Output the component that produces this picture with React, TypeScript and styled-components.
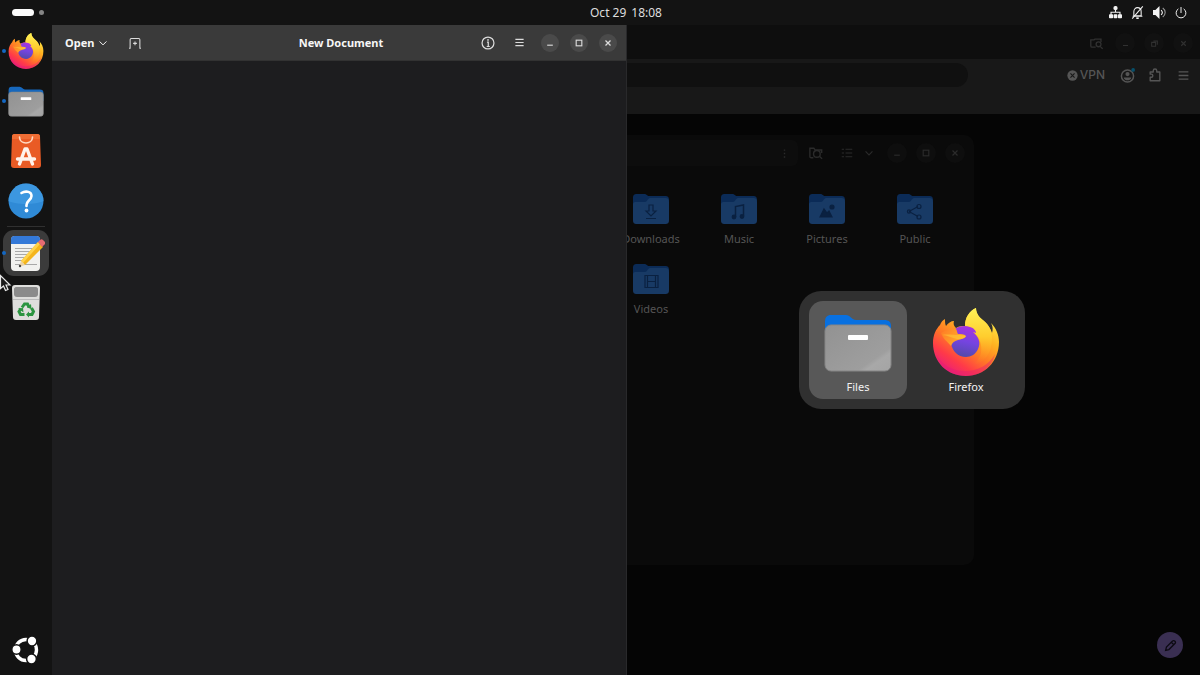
import React, { useId } from "react";
import styled, { createGlobalStyle, css } from "styled-components";

const GlobalStyle = createGlobalStyle`
  *, *::before, *::after { box-sizing: border-box; }
  html, body { margin: 0; background: #050505; }
  body { font-family: "Noto Sans", "Open Sans", sans-serif; font-size: 11px; line-height: 16px; color: #f2f2f2; }
  button, input, textarea { font: inherit; color: inherit; border: 0; padding: 0; margin: 0; background: none; outline: none; }
  svg { display: block; flex: none; }
`;

const Shell = styled.div`
  display: flex;
  flex-direction: column;
  min-height: 100vh;
  overflow: hidden;
  position: relative;
`;

/* ---------- top bar ---------- */
const TopBar = styled.header`
  display: grid;
  grid-template-columns: 52px 1fr auto 1fr;
  align-items: center;
  height: 25px;
  background: #131313;
`;
const Workspaces = styled.button`
  display: flex;
  align-items: center;
  gap: 5px;
  padding-left: 12px;
`;
const WorkspaceMark = styled.span<{ $active?: boolean }>`
  width: ${(p) => (p.$active ? 22 : 5)}px;
  height: ${(p) => (p.$active ? 7 : 5)}px;
  border-radius: 4px;
  background: ${(p) => (p.$active ? "#fbfbfb" : "#858585")};
`;
const Clock = styled.button`
  display: flex;
  gap: 5px;
  grid-column: 3;
  color: #dedede;
  font-size: 12px;
`;
const StatusButton = styled.button`
  display: flex;
  justify-self: end;
  align-items: center;
  gap: 9px;
  padding-right: 13px;
`;

/* ---------- dock ---------- */
const Main = styled.div`
  display: flex;
  flex: 1;
`;
const Dock = styled.nav`
  display: flex;
  flex-direction: column;
  width: 52px;
  padding-top: 1px;
  background: #131313;
`;
const DockItem = styled.button<{ $running?: boolean; $active?: boolean }>`
  position: relative;
  display: grid;
  place-items: center;
  width: 46px;
  height: 46px;
  margin: 2px 3px;
  border-radius: 11px;
  background: ${(p) => (p.$active ? "#3b3b3b" : "none")};
  ${(p) =>
    p.$running &&
    css`
      &::before {
        content: "";
        position: absolute;
        left: -1px;
        width: 4px;
        height: 4px;
        border-radius: 50%;
        background: #1467c2;
      }
    `}
`;
const DockDivider = styled.hr`
  width: 38px;
  height: 1px;
  margin: 0 auto 1px;
  border: 0;
  background: #303030;
`;
const DockSpacer = styled.div`
  flex: 1;
`;

/* ---------- windows ---------- */
const Desktop = styled.main`
  position: relative;
  flex: 1;
  background: #050505;
`;
const RoundButton = styled.button<{ $fill?: string; $size?: number }>`
  display: grid;
  place-items: center;
  flex: none;
  width: ${(p) => p.$size ?? 20}px;
  height: ${(p) => p.$size ?? 20}px;
  border-radius: 50%;
  background: ${(p) => p.$fill ?? "none"};
`;
const Group = styled.div<{ $gap: number; $end?: boolean }>`
  display: flex;
  align-items: center;
  gap: ${(p) => p.$gap}px;
  ${(p) => p.$end && "justify-self: end;"}
`;

const BrowserWindow = styled.section`
  position: absolute;
  inset: 0;
  color: #555;
`;
const BrowserTitle = styled.div`
  display: flex;
  justify-content: flex-end;
  align-items: center;
  gap: 9px;
  height: 34px;
  padding: 2px 7px 0 0;
  background: #0e0e0e;
  color: #313131;
`;
const BrowserTools = styled.div`
  display: flex;
  align-items: center;
  gap: 8px;
  height: 55px;
  padding: 0 7px 23px 0;
  background: #181818;
`;
const AddressBar = styled.input`
  flex: 1;
  height: 24px;
  margin-right: 91px;
  border-radius: 12px;
  background: #101010;
`;
const VpnButton = styled.button`
  display: flex;
  align-items: center;
  gap: 2px;
  margin-right: 4px;
  font-family: Inter, sans-serif;
  font-size: 12px;
  font-weight: 500;
`;
const EditFab = styled.button`
  position: absolute;
  right: 17px;
  bottom: 17px;
  display: grid;
  place-items: center;
  width: 26px;
  height: 26px;
  border-radius: 50%;
  background: #3a2f52;
  color: #0c0a12;
`;

const FilesWindow = styled.section`
  position: absolute;
  top: 110px;
  right: 226px;
  width: 367px;
  height: 430px;
  border-radius: 10px;
  background: #0a0a0a;
  color: #555;
`;
const FilesHeader = styled.div`
  display: flex;
  align-items: center;
  gap: 8px;
  height: 36px;
  padding-right: 9px;
  color: #2b2b2b;
`;
const PathBar = styled.div`
  display: flex;
  flex: 1;
  justify-content: flex-end;
  align-items: center;
  height: 26px;
  padding-right: 4px;
  border-radius: 6px;
  background: #0d0d0d;
`;
const FolderGrid = styled.div`
  display: grid;
  grid-template-columns: repeat(4, 88px);
  row-gap: 10px;
  padding-top: 22px;
`;
const FolderItem = styled.button`
  display: flex;
  flex-direction: column;
  align-items: center;
  gap: 6px;
  height: 60px;
`;

const EditorWindow = styled.section`
  position: absolute;
  inset: 0 calc(50% - 1px) 0 0;
  display: flex;
  flex-direction: column;
  border-right: 1px solid #29292b;
  background: #1d1d1f;
`;
const EditorHeader = styled.div`
  display: grid;
  grid-template-columns: 1fr auto 1fr;
  align-items: center;
  height: 36px;
  padding: 0 9px 0 13px;
  background: #3a3a3a;
  border-bottom: 1px solid #323232;
  color: #dcdcdc;
`;
const OpenButton = styled.button`
  display: flex;
  align-items: center;
  gap: 4px;
  font-weight: 700;
  color: #f6f6f6;
`;
const EditorTitle = styled.h1`
  margin: 0;
  font-size: 11px;
  font-weight: 700;
  color: #f6f6f6;
`;
const EditorText = styled.textarea`
  flex: 1;
  padding: 8px;
  resize: none;
`;

/* ---------- app switcher ---------- */
const SwitcherLayer = styled.div`
  position: absolute;
  inset: 0 2px 0 50%;
  display: grid;
  place-items: center;
`;
const Switcher = styled.div`
  display: flex;
  gap: 10px;
  padding: 10px;
  border-radius: 22px;
  background: #303030;
`;
const SwitcherItem = styled.button<{ $selected?: boolean }>`
  display: flex;
  flex-direction: column;
  align-items: center;
  gap: 1px;
  width: 98px;
  height: 98px;
  padding-top: 5px;
  border-radius: 14px;
  background: ${(p) => (p.$selected ? "#585858" : "none")};
`;
const Pointer = styled.svg`
  position: absolute;
  left: 0;
  top: 274px;
`;

/* ---------- application icons ---------- */
function FirefoxIcon({ size }: { size: number }) {
  const id = useId();
  return (
    <svg width={size} height={size} viewBox="-3 -2 72 72">
      <defs>
        <linearGradient id={id + "b"} x1="0.85" y1="0.1" x2="0.25" y2="1">
          <stop offset="0" stopColor="#fff04a" />
          <stop offset="0.3" stopColor="#ffb321" />
          <stop offset="0.55" stopColor="#ff7a25" />
          <stop offset="0.78" stopColor="#ff3a48" />
          <stop offset="1" stopColor="#e81a80" />
        </linearGradient>
        <linearGradient id={id + "p"} x1="0.6" y1="0" x2="0.4" y2="1">
          <stop offset="0" stopColor="#a932e0" />
          <stop offset="0.5" stopColor="#7544e0" />
          <stop offset="1" stopColor="#524aa8" />
        </linearGradient>
        <linearGradient id={id + "f"} x1="0.5" y1="0" x2="0.5" y2="1">
          <stop offset="0" stopColor="#fff257" />
          <stop offset="0.5" stopColor="#ffcd2e" />
          <stop offset="1" stopColor="#ff8b1f" stopOpacity="0" />
        </linearGradient>
        <linearGradient id={id + "h"} x1="0" y1="0" x2="1" y2="0.5">
          <stop offset="0" stopColor="#ff7a26" />
          <stop offset="1" stopColor="#ffb02a" />
        </linearGradient>
      </defs>
      <path fill={`url(#${id}b)`} d="M33 68C14 68 0 54 0 35c0-8 3-14 7-18 1-3 3-5 5-6 0 3 0 5 1 7 2-3 5-5 8-5-1 3 0 5 2 7 3-2 6-2 9-2 0-8 4-15 11-18 0 6 4 10 8 13 4 4 7 8 8 12 1-3 1-7-1-10 5 5 8 12 8 19 0 20-15 34-33 34Z" />
      <path fill={`url(#${id}f)`} d="M32 18c0-8 4-15 11-18 0 6 4 10 8 13 5 4 8 10 8 17 0 16-8 25-19 27 8-6 9-14 8-20-1-8-7-13-16-19Z" />
      <path fill={`url(#${id}p)`} d="M22 21c4-3 10-4 15-2 4 1 6 4 6 6l-3-1c6 5 8 11 5 17-2 5-7 8-12 8-8 0-14-6-15-14l2-6Z" />
      <path fill={`url(#${id}h)`} d="M8 25c3-2 6-3 9-4 2-1 4-1 6 0 1 1 1 4 2 5 3 0 6 0 8 2-1 3-5 3-8 4-4 1-6 3-7 6-4-5-8-7-10-13Z" />
      <path fill="#ffd13a" fillOpacity="0.5" d="M9 27c5-1 12 0 16 0 3 0 6 0 8 1-2 3-6 3-9 3-5-1-10-4-15-4Z" />
      <path fill="#e21c78" fillOpacity="0.4" d="M3 46c6 11 16 17 29 17s24-6 30-17c-3 14-15 22-29 22S7 60 3 46Z" />
    </svg>
  );
}

function FilesIcon({ size, bright }: { size: number; bright?: boolean }) {
  const id = useId();
  return (
    <svg width={size} height={size} viewBox="0 0 72 72">
      <defs>
        <linearGradient id={id} x1="0" y1="0" x2="1" y2="1">
          <stop offset="0" stopColor="#929292" />
          <stop offset="0.74" stopColor="#9e9e9e" />
          <stop offset="0.8" stopColor="#a8a8a8" />
          <stop offset="1" stopColor="#a4a4a4" />
        </linearGradient>
      </defs>
      <path fill={bright ? "#0870e0" : "#1768bd"} d="M3 16c0-5 2-7 6-7h15c4 0 6 5 10 5h28c5 0 7 2 7 6v16H3Z" />
      <rect x="3" y="19" width="66" height="46" rx="6" fill={`url(#${id})`} stroke="#858585" strokeWidth="1" />
      <rect x="26" y="29" width="20" height="5" rx="1" fill="#fff" />
    </svg>
  );
}

const StoreIcon = () => (
  <svg width="30" height="36" viewBox="0 0 30 36">
    <path fill="#e95b25" d="M3 1h24c1 0 2 1 2 2l1 29c0 2-1 3-3 3H3c-2 0-3-1-3-3L1 3c0-1 1-2 2-2Z" />
    <path fill="#f4793f" d="M3 1h24c1 0 2 1 2 2v3H1V3c0-1 1-2 2-2Z" fillOpacity="0.6" />
    <path fill="none" stroke="#ffd9c2" strokeWidth="1.6" strokeLinecap="round" d="M8.500 4c0 8 13 8 13 0" />
    <path fill="none" stroke="#fff3ec" strokeWidth="3.400" strokeLinecap="round" strokeLinejoin="round" d="m8.500 31 5.500-15h2l5.500 15M6.500 26h17" />
  </svg>
);

const HelpIcon = () => (
  <svg width="36" height="36" viewBox="0 0 36 36">
    <circle cx="18" cy="18" r="17.500" fill="#2f8ad6" />
    <path fill="#46a0e6" d="M.5 18a17.500 17.500 0 0 1 35 0c-8 4-27 4-35 0Z" fillOpacity="0.6" />
    <path fill="none" stroke="#fff" strokeWidth="2.600" strokeLinecap="round" strokeLinejoin="round" d="M13.500 10c3-2 10-2.500 10 3 0 4-5 4.500-5 9v1" />
    <circle cx="18.500" cy="27.500" r="1.900" fill="#fff" />
  </svg>
);

const NotesIcon = () => (
  <svg width="38" height="38" viewBox="0 0 38 38">
    <rect x="4" y="2" width="29" height="35" rx="4" fill="#f1f1ef" />
    <path fill="#3479d8" d="M4 10V6c0-3 1-4 4-4h21c3 0 4 1 4 4v4Z" />
    <path stroke="#a8a8a8" strokeWidth="1" d="M8 14.500h19M8 17.500h15M8 20.500h13M8 23.500h11M8 26.500h9M8 30.500h22" />
    <path fill="#f4b51c" d="m14 27 17-19 5 5-18 18Z" />
    <path fill="#ffd34a" d="m14 27 17-19 2 2-17 19Z" />
    <path fill="#e56b72" d="m31 8 2-2c1-1 2-1 3 0l2 2c1 1 0 2-1 3l-2 2Z" />
    <path fill="#ecd2a5" d="m14 27 4 4-6 2Z" />
    <circle cx="13" cy="32" r="1.200" fill="#444" />
  </svg>
);

const TrashIcon = () => (
  <svg width="30" height="38" viewBox="0 0 30 38">
    <path fill="#dededc" d="M4 1h22c2 0 3 1 3 3l-1 29c0 2-1 3-3 3H5c-2 0-3-1-3-3L1 4c0-2 1-3 3-3Z" />
    <path fill="#8b8b8b" d="M5 3h20c1 0 2 1 2 2v5c0 2-1 3-3 3H6c-2 0-3-1-3-3V5c0-1 1-2 2-2Z" />
    <path stroke="#bbb" strokeWidth="1" d="M2 15.500h26" />
    <g fill="none" stroke="#2b9440" strokeWidth="3">
      <path d="m11 23.500 2.500-3.500h3l1.500 3" />
      <path d="m20.500 24 2 3.500-1.500 3h-4" />
      <path d="M13.500 30.500H9.500l-1.500-3 2-3" />
    </g>
    <path fill="#2b9440" d="m20 20 .5 5-4.500-1.500ZM18 27.500v6l-3-3ZM7 24.500l5-.5.5 4.500Z" />
  </svg>
);

const UbuntuIcon = () => (
  <svg width="30" height="30" viewBox="0 0 30 30">
    <circle cx="15" cy="15" r="10.500" fill="none" stroke="#fff" strokeWidth="3.400" />
    <g fill="#fff" stroke="#131313" strokeWidth="1.500">
      <circle cx="5.500" cy="14.500" r="4.700" />
      <circle cx="21" cy="6" r="4.900" />
      <circle cx="20.500" cy="24" r="4.900" />
    </g>
  </svg>
);

/* ---------- symbolic icons, drawn on a 16 unit grid ---------- */
const shapes: Record<string, React.ReactNode> = {
  chevron: <path d="m2.500 5.500 5.500 5.500 5.500-5.500" />,
  newTab: (
    <>
      <path d="M0 15h1.500V3.500c0-1 .5-1.500 1.500-1.500h10c1 0 1.500.5 1.500 1.500V15H16" />
      <path d="M8 6v5M5.500 8.500h5" />
    </>
  ),
  info: (
    <>
      <circle cx="8" cy="8" r="6.800" />
      <path d="M6.800 7H8.300v5M6.500 12h3.500" />
      <circle cx="8" cy="4.500" r="1" fill="currentColor" stroke="none" />
    </>
  ),
  menu: <path d="M2 3.500h12M2 8h12M2 12.500h12" />,
  minimize: <path d="M3.500 11.500h9" />,
  maximize: <rect x="3.500" y="3.500" width="9" height="9" />,
  restore: <path d="M3 6h7v7H3ZM6 3.500h7V10" />,
  close: <path d="m4 4 8 8M12 4l-8 8" />,
  network: (
    <g fill="currentColor" stroke="none">
      <rect x="5.500" y="0" width="5" height="5" rx="2" />
      <rect x="0" y="10" width="5" height="5" rx="1" />
      <rect x="5.700" y="10" width="4.600" height="5" rx="1" />
      <rect x="11" y="10" width="5" height="5" rx="1" />
      <path d="M7.300 4h1.400v3h5.500v4h-1.400V8.400H3.200V11H1.800V7h5.500Z" />
    </g>
  ),
  bellOff: (
    <>
      <path d="M3.500 12V7c0-3 2-5 4.500-5s4.500 2 4.500 5v5ZM2 12.500h12" />
      <path d="M6.500 15h3" strokeWidth="2" />
      <path d="M1.500 15.500 14.500.5" />
    </>
  ),
  volume: (
    <>
      <path fill="currentColor" stroke="none" d="M0 5h3l5-5v16l-5-5H0Z" />
      <path d="M10 5c2 2 2 4 0 6" />
      <path d="M12 2.500c4 3 4 8 0 11" strokeOpacity="0.6" />
    </>
  ),
  power: <path d="M4.500 2.500a6.500 6.500 0 1 0 7 0M8 0v8" />,
  windowSearch: (
    <>
      <path d="M7 12.500H2.500C1.500 12.500 1 12 1 11V3.500h4l1-1h7.500V6" />
      <circle cx="10.500" cy="9" r="3" />
      <path d="m12.500 11.500 3 3" />
    </>
  ),
  folderSearch: (
    <>
      <path d="M5 13.500H2.500c-1 0-1.500-.5-1.500-1.500V2.500h4.500l1.500 2h7.500V8" />
      <circle cx="9" cy="9" r="3.800" />
      <path d="m11.500 11.500 3.500 3" />
    </>
  ),
  list: <path d="M1 3h3M1 8h3M1 13h3M6 3h9M6 8h9M6 13h9" />,
  more: <path d="M8 2v2M8 7v2M8 12v2" strokeWidth="2" />,
  shieldOff: (
    <>
      <circle cx="8" cy="8" r="7.500" fill="currentColor" stroke="none" />
      <path d="m5 5 6 6M11 5l-6 6" stroke="#181818" />
    </>
  ),
  account: (
    <>
      <circle cx="8" cy="8.500" r="6.500" />
      <circle cx="8" cy="6.500" r="2.200" fill="currentColor" stroke="none" />
      <path d="M4 10h8c0 4-8 4-8 0Z" fill="currentColor" stroke="none" />
      <circle cx="14" cy="2" r="2" fill="#07506b" stroke="none" />
    </>
  ),
  puzzle: <path d="M2.500 14.500v-4H4c2 0 2-3.500 0-3.500H2.500V4.500H6V3c0-2.500 4-2.500 4 0v1.500h3.500v10Z" strokeLinejoin="round" />,
  pencil: <path d="m2 14 1-4 7.500-7.500c2-1.500 5 1 3 3L6 13ZM9 4l3 3" />,
};
function Symbol({ name, size = 12, weight = 1.3 }: { name: string; size?: number; weight?: number }) {
  return (
    <svg width={size} height={size} viewBox="0 0 16 16" fill="none" stroke="currentColor" strokeWidth={weight} aria-hidden="true">
      {shapes[name]}
    </svg>
  );
}

const emblems: Record<string, React.ReactNode> = {
  Downloads: <path d="M16 12h4v6h3l-5 5-5-5h3ZM13 25.500h10" />,
  Music: (
    <>
      <path d="M14.500 24V13.500l8-1.500v11" strokeWidth="1.500" />
      <circle cx="13" cy="24" r="1.800" fill="#0a2141" />
      <circle cx="21" cy="23.500" r="1.800" fill="#0a2141" />
    </>
  ),
  Pictures: (
    <>
      <path d="m11 24 4-8 3 4 2-2 3 6Z" fill="#0a2141" />
      <circle cx="23" cy="14" r="2" fill="#0a2141" />
    </>
  ),
  Public: (
    <>
      <path d="m12 18.500 9-5M12 18.500l9 5" />
      <circle cx="12" cy="18.500" r="1.600" />
      <circle cx="22" cy="13.500" r="2" />
      <circle cx="22" cy="24" r="2" />
    </>
  ),
  Videos: <path d="M12 12.500h13v12H12ZM14.500 12.500v12M22.500 12.500v12M14.500 18.500h8" />,
};
const FolderIcon = ({ name }: { name: string }) => (
  <svg width="36" height="32" viewBox="0 0 36 32">
    <path fill="#0b2b57" d="M0 5c0-3 1-4 4-4h7c3 0 3 2 5 2h16c3 0 4 1 4 4v10H0Z" />
    <path fill="#183a65" d="M0 12c0-3 1-3 4-3h8c2 0 3-4 5-4h15c3 0 4 1 4 4v18c0 3-1 4-4 4H4c-3 0-4-1-4-4Z" />
    <g fill="none" stroke="#0a2141" strokeWidth="1.200">
      {emblems[name]}
    </g>
  </svg>
);

function WindowButtons({ fill, middle = "maximize", size, glyph = 10 }: { fill: string; middle?: string; size: number; glyph?: number }) {
  return (
    <>
      <RoundButton $fill={fill} $size={size} aria-label="Minimize"><Symbol name="minimize" size={glyph} weight={1.8} /></RoundButton>
      <RoundButton $fill={fill} $size={size} aria-label="Maximize"><Symbol name={middle} size={glyph} weight={1.8} /></RoundButton>
      <RoundButton $fill={fill} $size={size} aria-label="Close"><Symbol name="close" size={glyph} weight={2} /></RoundButton>
    </>
  );
}

export default function App() {
  return (
    <Shell>
      <GlobalStyle />
      <TopBar>
        <Workspaces aria-label="Workspaces">
          <WorkspaceMark $active />
          <WorkspaceMark />
        </Workspaces>
        <Clock><span>Oct 29</span> <span>18:08</span></Clock>
        <StatusButton aria-label="System menu">
          <Symbol name="network" size={13} />
          <Symbol name="bellOff" size={13} />
          <Symbol name="volume" size={13} />
          <Symbol name="power" size={12} />
        </StatusButton>
      </TopBar>
      <Main>
        <Dock aria-label="Dock">
          <DockItem $running aria-label="Firefox"><FirefoxIcon size={38} /></DockItem>
          <DockItem $running aria-label="Files"><FilesIcon size={38} /></DockItem>
          <DockItem aria-label="App Center"><StoreIcon /></DockItem>
          <DockItem aria-label="Help"><HelpIcon /></DockItem>
          <DockDivider />
          <DockItem $running $active aria-label="Text Editor"><NotesIcon /></DockItem>
          <DockItem aria-label="Trash"><TrashIcon /></DockItem>
          <DockSpacer />
          <DockItem aria-label="Show Apps"><UbuntuIcon /></DockItem>
        </Dock>
        <Desktop>
          <BrowserWindow aria-label="Firefox">
            <BrowserTitle>
              <RoundButton aria-label="Search tabs"><Symbol name="windowSearch" size={13} weight={1.6} /></RoundButton>
              <WindowButtons fill="#111111" middle="restore" size={20} glyph={9} />
            </BrowserTitle>
            <BrowserTools>
              <AddressBar aria-label="Address" />
              <VpnButton><Symbol name="shieldOff" size={11} weight={1.6} />VPN</VpnButton>
              <RoundButton aria-label="Account"><Symbol name="account" size={15} weight={1.6} /></RoundButton>
              <RoundButton aria-label="Extensions"><Symbol name="puzzle" size={14} weight={1.6} /></RoundButton>
              <RoundButton aria-label="Application menu"><Symbol name="menu" size={13} weight={1.6} /></RoundButton>
            </BrowserTools>
            <EditFab aria-label="Edit"><Symbol name="pencil" size={13} weight={1.6} /></EditFab>
          </BrowserWindow>

          <FilesWindow aria-label="Files">
            <FilesHeader>
              <PathBar>
                <RoundButton aria-label="Folder menu"><Symbol name="more" size={11} /></RoundButton>
              </PathBar>
              <Group $gap={11}>
                <RoundButton aria-label="Search everywhere"><Symbol name="folderSearch" size={14} weight={1.6} /></RoundButton>
                <Group $gap={2}>
                  <RoundButton aria-label="List view"><Symbol name="list" size={12} weight={1.6} /></RoundButton>
                  <RoundButton aria-label="View options"><Symbol name="chevron" size={10} weight={1.8} /></RoundButton>
                </Group>
              </Group>
              <Group $gap={9}>
                <WindowButtons fill="#0e0e0e" size={20} />
              </Group>
            </FilesHeader>
            <FolderGrid>
              {["Downloads", "Music", "Pictures", "Public", "Videos"].map((name) => (
                <FolderItem key={name}>
                  <FolderIcon name={name} />
                  {name}
                </FolderItem>
              ))}
            </FolderGrid>
          </FilesWindow>

          <EditorWindow aria-label="Text Editor">
            <EditorHeader>
              <Group $gap={17}>
                <OpenButton>Open<Symbol name="chevron" size={10} weight={1.6} /></OpenButton>
                <RoundButton aria-label="New tab"><Symbol name="newTab" size={12} weight={1.4} /></RoundButton>
              </Group>
              <EditorTitle>New Document</EditorTitle>
              <Group $gap={12} $end>
                <Group $gap={11}>
                  <RoundButton aria-label="Document properties"><Symbol name="info" size={14} weight={1.4} /></RoundButton>
                  <RoundButton aria-label="Main menu"><Symbol name="menu" size={11} weight={1.6} /></RoundButton>
                </Group>
                <Group $gap={11}>
                  <WindowButtons fill="#4a4a4a" size={18} />
                </Group>
              </Group>
            </EditorHeader>
            <EditorText aria-label="Document text" />
          </EditorWindow>

          <SwitcherLayer>
            <Switcher>
              <SwitcherItem $selected>
                <FilesIcon size={72} bright />
                Files
              </SwitcherItem>
              <SwitcherItem>
                <FirefoxIcon size={72} />
                Firefox
              </SwitcherItem>
            </Switcher>
          </SwitcherLayer>
        </Desktop>
      </Main>
      <Pointer width="12" height="18" viewBox="0 0 12 18">
        <path fill="#1a1a1a" stroke="#e8e8e8" strokeWidth="1.200" d="M.5 1.500v13l3-2.500 2 4.500 2.500-1-2-4.500h4Z" />
      </Pointer>
    </Shell>
  );
}
